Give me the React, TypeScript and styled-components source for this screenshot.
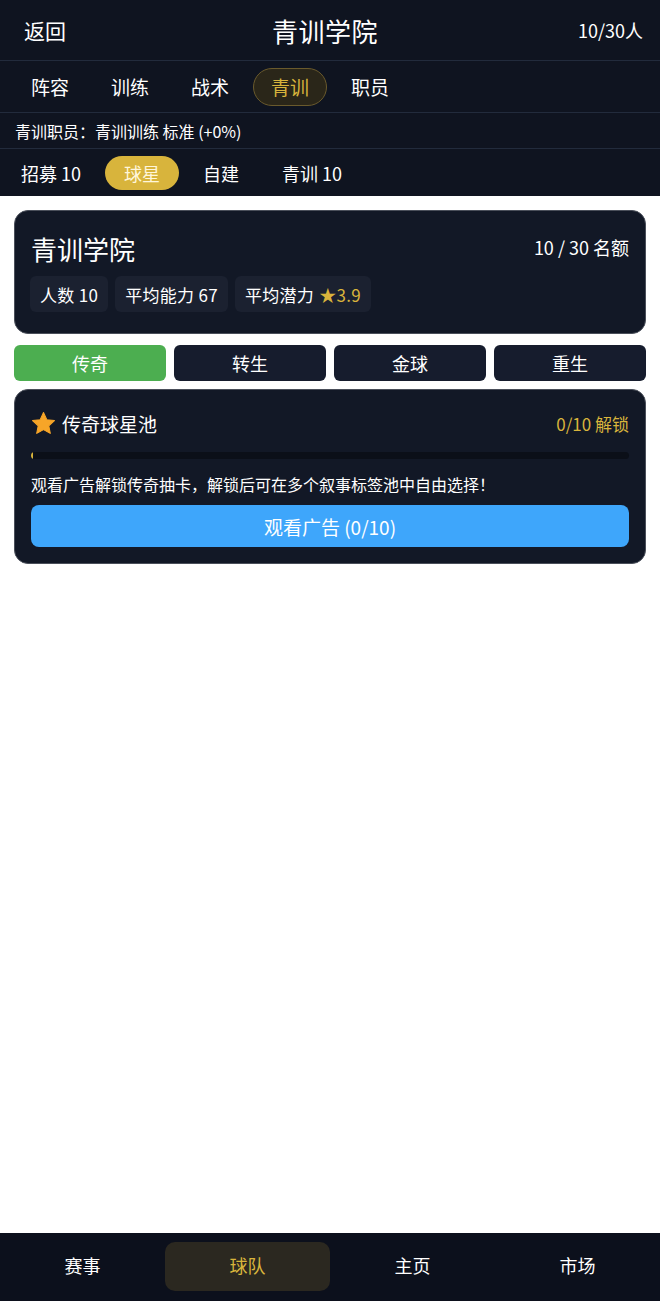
import React, { useState } from "react";
import styled, { createGlobalStyle } from "styled-components";

const GlobalStyle = createGlobalStyle`
  html, body {
    margin: 0;
    padding: 0;
    background: #ffffff;
    font-family: "Noto Sans CJK SC", "Noto Sans", sans-serif;
  }
  * { box-sizing: border-box; }
`;

const gold = "#d8b43c";
const line = "#222b3c";

const Page = styled.div`
  min-height: 100vh;
  display: flex;
  flex-direction: column;
`;

const TopBar = styled.header`
  height: 61px;
  background: #0f1420;
  border-bottom: 1px solid ${line};
  display: flex;
  justify-content: space-between;
  align-items: center;
  padding: 0 17px 0 24px;
  color: #fff;
`;

const BackLink = styled.span`
  font-size: 21px;
`;

const Title = styled.h1`
  margin: 0 0 0 6px;
  font-size: 26px;
  font-weight: 400;
  letter-spacing: 0.5px;
`;

const Count = styled.span`
  font-size: 18px;
`;

const TabBar = styled.nav`
  height: 52px;
  background: #0f1420;
  border-bottom: 1px solid ${line};
  display: flex;
  align-items: center;
  gap: 6px;
  padding: 0 13px;
`;

const Tab = styled.span<{ $active?: boolean }>`
  height: 38px;
  padding: 0 17px;
  display: flex;
  align-items: center;
  font-size: 19px;
  border-radius: 19px;
  border: 1px solid ${(p) => (p.$active ? "#6a5a2c" : "transparent")};
  background: ${(p) => (p.$active ? "#2a2619" : "transparent")};
  color: ${(p) => (p.$active ? gold : "#fff")};
`;

const StaffLine = styled.div`
  height: 36px;
  background: #0f1420;
  border-bottom: 1px solid ${line};
  display: flex;
  align-items: center;
  padding: 0 15px;
  color: #fff;
  font-size: 16px;
`;

const SubBar = styled.div`
  height: 47px;
  background: #0f1420;
  display: flex;
  align-items: center;
  gap: 5px;
  padding: 0 0 0 2px;
`;

const SubTab = styled.span<{ $active?: boolean }>`
  height: 34px;
  padding: 0 19px;
  display: flex;
  align-items: center;
  font-size: 18px;
  border-radius: 17px;
  background: ${(p) => (p.$active ? gold : "transparent")};
  color: ${(p) => (p.$active ? "#fff6da" : "#fff")};
`;

const Main = styled.main`
  flex: 1;
  padding: 14px 14px;
  display: flex;
  flex-direction: column;
`;

const Card = styled.section`
  background: #121826;
  border: 1px solid #4a4f5a;
  border-radius: 14px;
  color: #fff;
`;

const AcademyCard = styled(Card)`
  padding: 21px 16px 21px 15px;
`;

const CardHead = styled.div`
  display: flex;
  justify-content: space-between;
  align-items: center;
  padding-left: 1px;
`;

const BigTitle = styled.h2`
  margin: 0;
  font-size: 26px;
  font-weight: 400;
  line-height: 34px;
`;

const Quota = styled.span`
  font-size: 18px;
  margin-top: -4px;
`;

const Chips = styled.div`
  display: flex;
  gap: 7px;
  margin-top: 10px;
`;

const Chip = styled.span`
  height: 36px;
  padding: 0 10px;
  display: flex;
  align-items: center;
  background: #1b2130;
  border-radius: 6px;
  font-size: 17px;
  letter-spacing: 0.3px;
`;

const Gold = styled.span`
  color: ${gold};
  margin-left: 5px;
`;

const Categories = styled.div`
  display: grid;
  grid-template-columns: repeat(4, 1fr);
  gap: 8px;
  margin: 11px 0 8px;
`;

const Category = styled.span<{ $active?: boolean }>`
  height: 36px;
  display: flex;
  align-items: center;
  justify-content: center;
  border-radius: 6px;
  font-size: 18px;
  color: #fff;
  background: ${(p) => (p.$active ? "#4cae50" : "#161c2d")};
`;

const PoolCard = styled(Card)`
  padding: 20px 16px 16px 16px;
`;

const PoolHead = styled.div`
  display: flex;
  justify-content: space-between;
  align-items: center;
`;

const PoolTitle = styled.span`
  display: flex;
  align-items: center;
  gap: 6px;
  font-size: 19px;
`;

const Unlock = styled.span`
  font-size: 17px;
  color: ${gold};
`;

const Track = styled.div`
  height: 7px;
  margin-top: 15px;
  border-radius: 4px;
  background: #0b0f18;
  overflow: hidden;
`;

const Fill = styled.div`
  height: 100%;
  background: ${gold};
`;

const Desc = styled.p`
  margin: 13px 0 0;
  font-size: 16px;
  line-height: 24px;
`;

const WatchButton = styled.button`
  width: 100%;
  height: 42px;
  margin-top: 9px;
  border: none;
  border-radius: 8px;
  background: #3ea6fb;
  color: #fff;
  font-family: inherit;
  font-size: 19px;
`;

const BottomNav = styled.footer`
  height: 68px;
  background: #0c101c;
  display: grid;
  grid-template-columns: repeat(4, 1fr);
  align-items: center;
`;

const NavItem = styled.span<{ $active?: boolean }>`
  height: 49px;
  margin-top: -2px;
  display: flex;
  align-items: center;
  justify-content: center;
  padding-bottom: 2px;
  border-radius: 10px;
  font-size: 18px;
  color: ${(p) => (p.$active ? gold : "#fff")};
  background: ${(p) => (p.$active ? "#2b2820" : "transparent")};
`;

function Star() {
  return (
    <svg width="25" height="25" viewBox="0 0 24 24">
      <path
        d="M12 1.5l3.2 6.8 7.3.9-5.4 5 1.4 7.3L12 17.9l-6.5 3.6 1.4-7.3-5.4-5 7.3-.9z"
        fill="#f7a528"
        stroke="#f7a528"
        strokeWidth="1"
        strokeLinejoin="round"
      />
    </svg>
  );
}

export default function App() {
  const [tab] = useState("青训");
  const tabs = ["阵容", "训练", "战术", "青训", "职员"];
  const subTabs = ["招募 10", "球星", "自建", "青训 10"];
  const categories = ["传奇", "转生", "金球", "重生"];
  const nav = ["赛事", "球队", "主页", "市场"];
  const progress = 0;

  return (
    <Page>
      <GlobalStyle />
      <TopBar>
        <BackLink>返回</BackLink>
        <Title>青训学院</Title>
        <Count>10/30人</Count>
      </TopBar>
      <TabBar>
        {tabs.map((t) => (
          <Tab key={t} $active={t === tab}>
            {t}
          </Tab>
        ))}
      </TabBar>
      <StaffLine>青训职员：青训训练 标准 (+0%)</StaffLine>
      <SubBar>
        {subTabs.map((t) => (
          <SubTab key={t} $active={t === "球星"}>
            {t}
          </SubTab>
        ))}
      </SubBar>
      <Main>
        <AcademyCard>
          <CardHead>
            <BigTitle>青训学院</BigTitle>
            <Quota>10 / 30 名额</Quota>
          </CardHead>
          <Chips>
            <Chip>人数 10</Chip>
            <Chip>平均能力 67</Chip>
            <Chip>
              平均潜力<Gold>★3.9</Gold>
            </Chip>
          </Chips>
        </AcademyCard>
        <Categories>
          {categories.map((c) => (
            <Category key={c} $active={c === "传奇"}>
              {c}
            </Category>
          ))}
        </Categories>
        <PoolCard>
          <PoolHead>
            <PoolTitle>
              <Star />
              传奇球星池
            </PoolTitle>
            <Unlock>0/10 解锁</Unlock>
          </PoolHead>
          <Track>
            <Fill style={{ width: `${Math.max(progress, 0.3)}%` }} />
          </Track>
          <Desc>观看广告解锁传奇抽卡，解锁后可在多个叙事标签池中自由选择！</Desc>
          <WatchButton>观看广告 (0/10)</WatchButton>
        </PoolCard>
      </Main>
      <BottomNav>
        {nav.map((n) => (
          <NavItem key={n} $active={n === "球队"}>
            {n}
          </NavItem>
        ))}
      </BottomNav>
    </Page>
  );
}
